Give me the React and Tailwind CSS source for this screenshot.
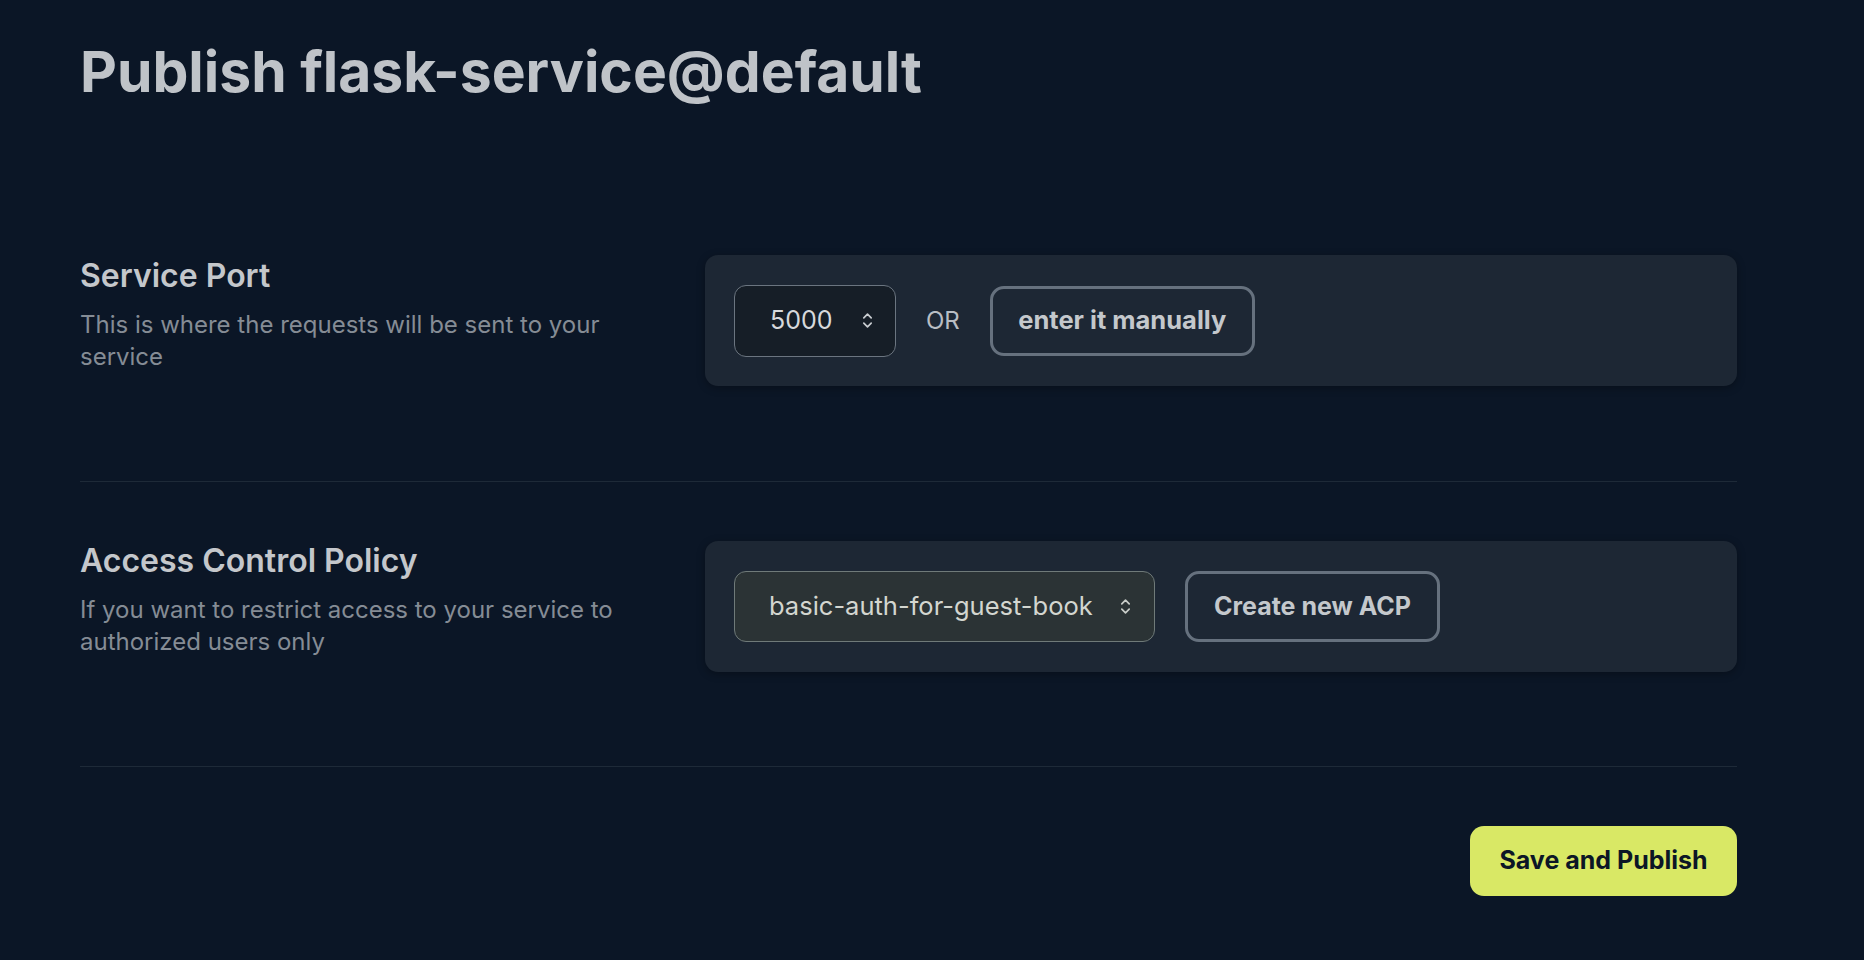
import React from "react";

function UpDown({ className = "" }) {
  return (
    <svg viewBox="0 0 12 18" className={className} fill="none" stroke="currentColor" strokeWidth="1.6" strokeLinecap="round" strokeLinejoin="round">
      <path d="M2.5 6.5 L6 3 L9.5 6.5" />
      <path d="M2.5 11.5 L6 15 L9.5 11.5" />
    </svg>
  );
}

function Section({ title, desc, children, headPad }) {
  return (
    <div className="flex items-start">
      <div className={`w-[625px] flex-none ${headPad}`}>
        <h2 className="text-[32px] leading-[36px] font-semibold text-[#c4c7cb]">{title}</h2>
        <p className="mt-[15px] w-[580px] text-[24px] leading-[32px] text-[#858c95]">{desc}</p>
      </div>
      <div className="flex-1 h-[131px] rounded-[13px] bg-[#1d2734] shadow-[0_2px_8px_rgba(0,0,0,0.3)] px-[29px] flex items-center gap-[30px]">
        {children}
      </div>
    </div>
  );
}

export default function App() {
  return (
    <div className="min-h-screen bg-[#0b1626] font-['Inter',sans-serif]">
      <div className="ml-[80px] w-[1657px] pt-[40px]">
        <h1 className="text-[57px] leading-[64px] font-bold text-[#bfc3c8]">Publish flask-service@default</h1>

        <div className="mt-[151px]">
          <Section
            title="Service Port"
            desc="This is where the requests will be sent to your service"
            headPad="pt-[3px]"
          >
            <div className="w-[162px] h-[72px] rounded-[12px] border-[1.5px] border-[#6b7580] bg-[#161e27] flex items-center justify-between pl-[35px] pr-[21px]">
              <span className="text-[25px] text-[#d6d9dc]">5000</span>
              <UpDown className="w-[13px] h-[19px] text-[#c9cdd1]" />
            </div>
            <span className="text-[24px] text-[#b9bec4]">OR</span>
            <button className="w-[265px] h-[70px] rounded-[14px] border-[3px] border-[#66717e] text-[25.5px] font-bold text-[#c4c8cc]">
              enter it manually
            </button>
          </Section>
        </div>

        <div className="mt-[95px] border-t border-[#1e2a38]" />

        <div className="mt-[59px]">
          <Section
            title="Access Control Policy"
            desc="If you want to restrict access to your service to authorized users only"
            headPad="pt-[2px]"
          >
            <div className="w-[421px] h-[71px] rounded-[12px] border-[1.5px] border-[#6f7a79] bg-[#2b3335] flex items-center justify-between pl-[34px] pr-[22px]">
              <span className="text-[25.5px] text-[#d3d6d0]">basic-auth-for-guest-book</span>
              <UpDown className="w-[13px] h-[19px] text-[#c9cdc9]" />
            </div>
            <button className="w-[255px] h-[71px] rounded-[14px] border-[3px] border-[#66717e] text-[25px] font-bold text-[#c4c8cc]">
              Create new ACP
            </button>
          </Section>
        </div>

        <div className="mt-[94px] border-t border-[#1e2a38]" />

        <div className="mt-[59px] flex justify-end">
          <button className="w-[267px] h-[70px] rounded-[14px] bg-[#d9e865] text-[25px] font-bold text-[#0c1626]">
            Save and Publish
          </button>
        </div>
      </div>
    </div>
  );
}
